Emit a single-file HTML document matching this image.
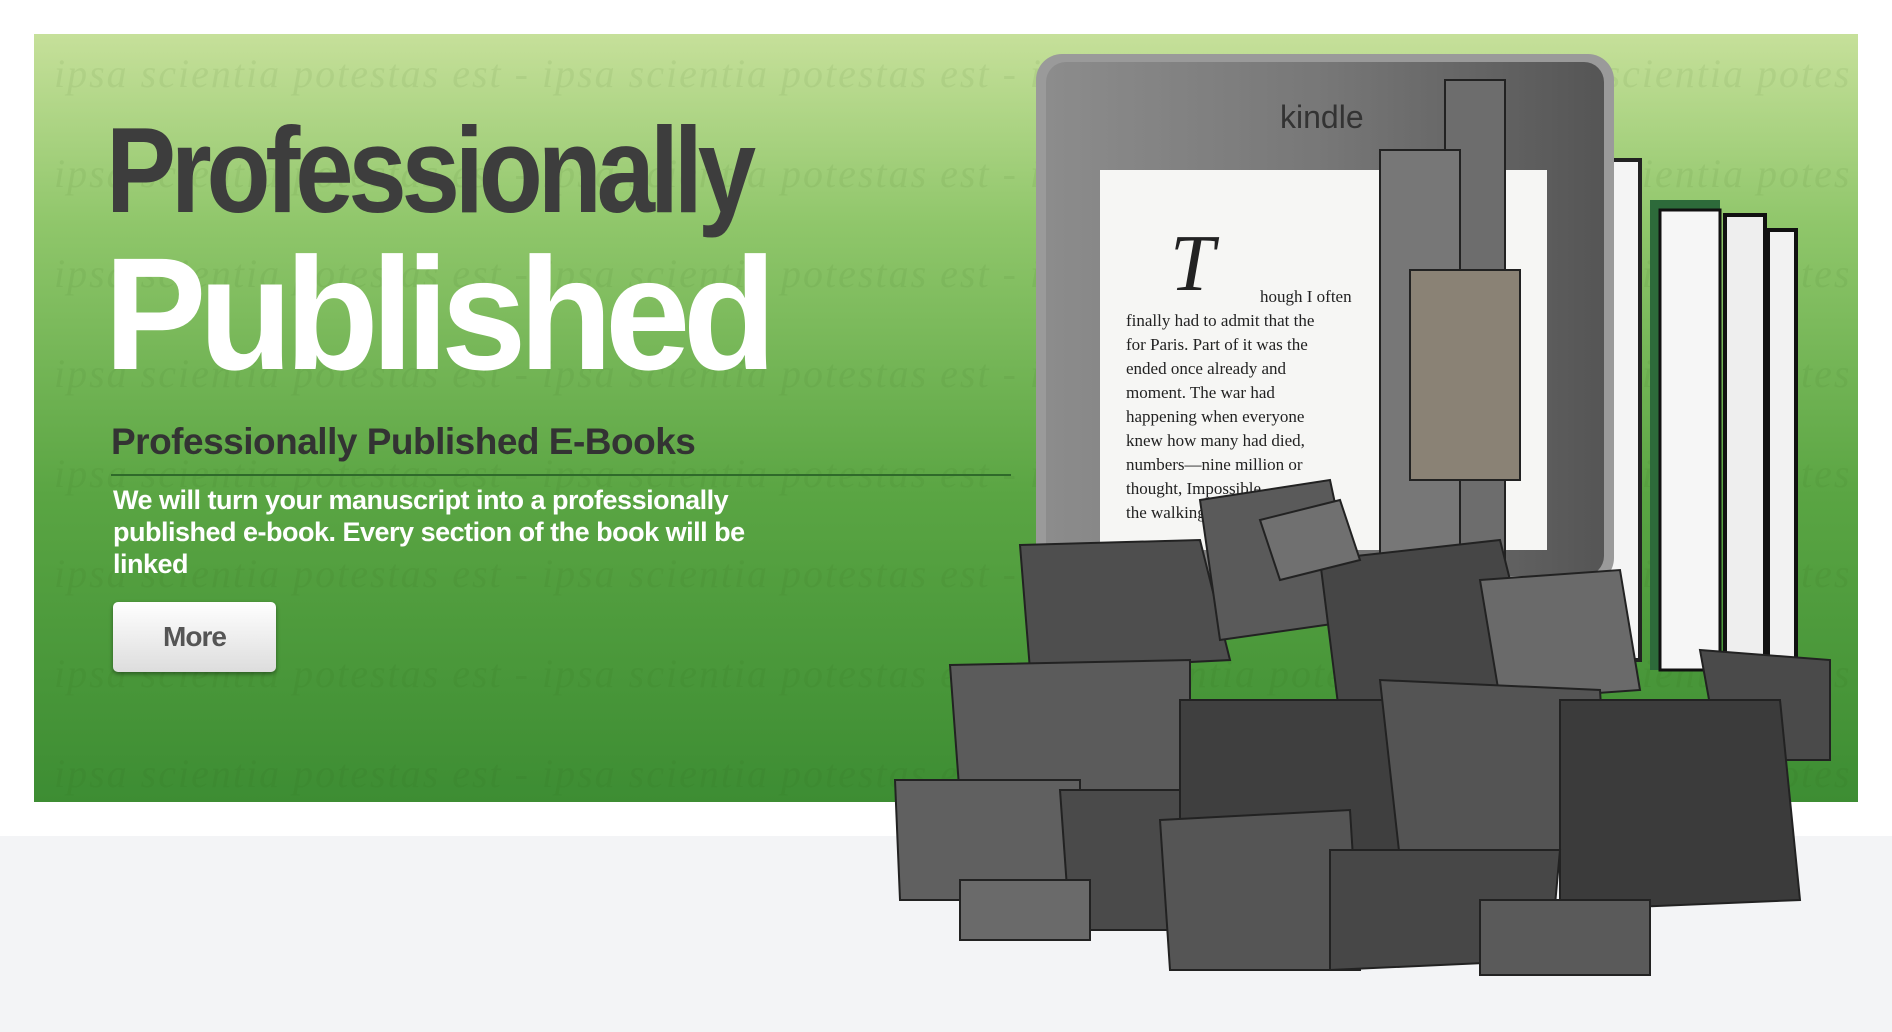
<!DOCTYPE html>
<html><head><meta charset="utf-8"><style>
html,body{margin:0;padding:0;width:1892px;height:1032px;overflow:hidden;background:#fff;font-family:"Liberation Sans",sans-serif}
.bottom{position:absolute;left:0;top:836px;width:1892px;height:196px;background:#f3f4f6}
.banner{position:absolute;left:34px;top:34px;width:1824px;height:768px;background:linear-gradient(#c6e09a 0%,#8fc66a 25%,#5aa543 60%,#3d8d33 100%);overflow:hidden}
.script{position:absolute;left:20px;font-family:"Liberation Serif",serif;font-style:italic;font-size:40px;color:rgba(40,80,20,.07);white-space:nowrap;letter-spacing:2px}
.t1{position:absolute;left:106px;top:100px;font-size:122px;font-weight:bold;color:#3d3d3d;letter-spacing:-6px;transform:scaleX(.86);transform-origin:left}
.t2{position:absolute;left:104px;top:222px;font-size:160px;font-weight:bold;color:#fff;letter-spacing:-8px;transform:scaleX(.96);transform-origin:left}
.t3{position:absolute;left:111px;top:421px;font-size:37px;color:#333;font-weight:bold;letter-spacing:-.5px}
.hr{position:absolute;left:111px;top:474px;width:900px;height:2px;background:#2f6a2a}
.p{position:absolute;left:113px;top:484px;width:660px;font-size:27px;line-height:32px;color:#fff;font-weight:bold;letter-spacing:-.5px}
.btn{position:absolute;left:113px;top:602px;width:163px;height:70px;border-radius:5px;background:linear-gradient(#fff,#ddd);box-shadow:0 2px 4px rgba(0,0,0,.4);font-size:28px;color:#555;text-align:center;line-height:70px;font-weight:bold;letter-spacing:-1px}
</style></head><body>
<div class="bottom"></div>
<div class="banner">
<div class="script" style="top:16px">ipsa scientia potestas est - ipsa scientia potestas est - ipsa scientia potestas est - ipsa scientia potes</div>
<div class="script" style="top:116px">ipsa scientia potestas est - ipsa scientia potestas est - ipsa scientia potestas est - ipsa scientia potes</div>
<div class="script" style="top:216px">ipsa scientia potestas est - ipsa scientia potestas est - ipsa scientia potestas est - ipsa scientia potes</div>
<div class="script" style="top:316px">ipsa scientia potestas est - ipsa scientia potestas est - ipsa scientia potestas est - ipsa scientia potes</div>
<div class="script" style="top:416px">ipsa scientia potestas est - ipsa scientia potestas est - ipsa scientia potestas est - ipsa scientia potes</div>
<div class="script" style="top:516px">ipsa scientia potestas est - ipsa scientia potestas est - ipsa scientia potestas est - ipsa scientia potes</div>
<div class="script" style="top:616px">ipsa scientia potestas est - ipsa scientia potestas est - ipsa scientia potestas est - ipsa scientia potes</div>
<div class="script" style="top:716px">ipsa scientia potestas est - ipsa scientia potestas est - ipsa scientia potestas est - ipsa scientia potes</div>
</div>
<div class="t1">Professionally</div>
<div class="t2">Published</div>
<div class="t3">Professionally Published E-Books</div>
<div class="hr"></div>
<div class="p">We will turn your manuscript into a professionally published e-book. Every section of the book will be linked</div>
<div class="btn">More</div>
<svg style="position:absolute;left:0;top:0" width="1892" height="1032">
<defs><linearGradient id="bz" x1="0" y1="0" x2="1" y2="0"><stop offset="0" stop-color="#8c8c8c"/><stop offset=".5" stop-color="#777"/><stop offset="1" stop-color="#555"/></linearGradient></defs>
<rect x="1600" y="160" width="40" height="500" fill="#f4f4f4" stroke="#222" stroke-width="4"/>
<rect x="1650" y="200" width="70" height="470" fill="#2d6a3a"/>
<rect x="1660" y="210" width="60" height="460" fill="#f6f6f6" stroke="#111" stroke-width="3"/>
<rect x="1725" y="215" width="40" height="450" fill="#eee" stroke="#111" stroke-width="4"/>
<rect x="1768" y="230" width="28" height="440" fill="#f2f2f2" stroke="#111" stroke-width="4"/>
<rect x="1036" y="54" width="578" height="530" rx="26" fill="#9a9a9a"/>
<rect x="1046" y="62" width="558" height="514" rx="20" fill="url(#bz)"/>
<text x="1280" y="128" font-family="Liberation Sans" font-size="32" fill="#333">kindle</text>
<rect x="1100" y="170" width="447" height="380" fill="#f6f6f4"/>
<g font-family="Liberation Serif" font-size="17" fill="#222">
<text x="1170" y="290" font-size="80" font-style="italic">T</text>
<text x="1260" y="302">hough I often</text>
<text x="1126" y="326">finally had to admit that the</text>
<text x="1126" y="350">for Paris. Part of it was the</text>
<text x="1126" y="374">ended once already and</text>
<text x="1126" y="398">moment. The war had</text>
<text x="1126" y="422">happening when everyone</text>
<text x="1126" y="446">knew how many had died,</text>
<text x="1126" y="470">numbers—nine million or</text>
<text x="1126" y="494">thought, Impossible</text>
<text x="1126" y="518">the walking</text>
</g>
<g stroke="#222" stroke-width="2">
<rect x="1445" y="80" width="60" height="480" fill="#6d6d6d"/>
<rect x="1380" y="150" width="80" height="420" fill="#777"/>
<rect x="1410" y="270" width="110" height="210" fill="#8a8275"/>
<polygon points="1020,545 1200,540 1230,660 1030,670" fill="#4e4e4e"/>
<polygon points="1200,500 1330,480 1360,620 1220,640" fill="#5a5a5a"/>
<polygon points="1320,560 1500,540 1540,700 1340,720" fill="#464646"/>
<polygon points="1480,580 1620,570 1640,690 1500,700" fill="#6a6a6a"/>
<polygon points="1700,650 1830,660 1830,760 1720,760" fill="#4a4a4a"/>
<polygon points="950,665 1190,660 1190,800 960,800" fill="#5b5b5b"/>
<polygon points="1180,700 1400,700 1410,860 1180,870" fill="#3f3f3f"/>
<polygon points="1380,680 1600,690 1610,860 1400,860" fill="#545454"/>
<polygon points="1560,700 1780,700 1800,900 1560,910" fill="#3b3b3b"/>
<polygon points="895,780 1080,780 1080,900 900,900" fill="#606060"/>
<polygon points="1060,790 1180,790 1180,930 1070,930" fill="#4a4a4a"/>
<polygon points="1160,820 1350,810 1360,970 1170,970" fill="#555"/>
<polygon points="1330,850 1560,850 1550,960 1330,970" fill="#474747"/>
<polygon points="960,880 1090,880 1090,940 960,940" fill="#6a6a6a"/>
<polygon points="1480,900 1650,900 1650,975 1480,975" fill="#5a5a5a"/>
<polygon points="1260,520 1340,500 1360,560 1280,580" fill="#707070"/>
</g>
</svg>
</body></html>
